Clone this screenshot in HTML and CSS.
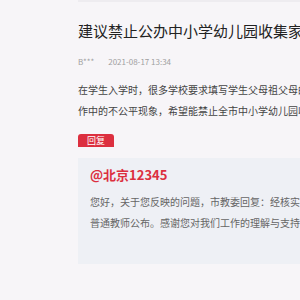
FILE: index.html
```html
<!DOCTYPE html>
<html lang="zh-CN">
<head>
    <meta charset="UTF-8">
    <title>建议禁止公办中小学幼儿园收集家长信息</title>
    <link rel="stylesheet" href="styles.css">
</head>
<body>
    <div class="page">
        <div class="top-edge"></div>
        <div class="article">
            <h1 class="title">建议禁止公办中小学幼儿园收集家长工作单位信息</h1>
            <div class="meta">
                <span class="author">B***</span>
                <span class="date">2021-08-17 13:34</span>
            </div>
            <p class="content">在学生入学时，很多学校要求填写学生父母祖父母的工作单位和职务，容易造成工作中的不公平现象，希望能禁止全市中小学幼儿园收集此类信息。</p>

            <div class="reply">
                <span class="reply-tag">回复</span>
                <div class="reply-box">
                    <div class="reply-from">@北京12345</div>
                    <p class="reply-text">您好，关于您反映的问题，市教委回复：经核实，相关信息仅用于学校管理，不会向普通教师公布。感谢您对我们工作的理解与支持！</p>
                </div>
            </div>
        </div>
    </div>
</body>
</html>
```

FILE: styles.css
```css
:root {
    --background: #f7f5f8;
    --edge: #eeecf0;
    --foreground: #333333;
    --muted: #a0a0a0;
    --primary: #dc2f3f;
    --card: #eef0f5;
    --card-foreground: #666666;
}

html,
body {
    height: 100%;
    overflow: hidden;
}

body {
    font-family: "Noto Sans CJK SC", "Noto Sans", sans-serif;
    background-color: var(--background);
    color: var(--foreground);
    margin: 0;
}

.page {
    padding-left: 78px;
}

.top-edge {
    height: 2px;
    background-color: var(--edge);
}

/* the article is wider than the window, lines run off the right edge */
.article {
    width: 460px;
}

.title {
    font-size: 15px;
    font-weight: 400;
    line-height: 20px;
    margin: 19px 0 0;
    white-space: nowrap;
    color: #222222;
}

.meta {
    margin-top: 15px;
    font-size: 8px;
    line-height: 12px;
    color: var(--muted);
    display: flex;
    gap: 14px;
}

.content {
    font-size: 10px;
    line-height: 21px;
    margin: 11px 0 0;
    width: 365px;
    color: #444444;
}

.reply {
    margin-top: 13px;
}

.reply-tag {
    display: inline-block;
    background-color: var(--primary);
    color: #ffffff;
    font-size: 9px;
    line-height: 13px;
    padding: 0 9px;
    border-radius: 3px 3px 0 0;
    margin-bottom: 3px;
    vertical-align: top;
}

.reply-box {
    background-color: var(--card);
    padding: 7px 12px 31px;
}

.reply-from {
    color: var(--primary);
    font-size: 13px;
    font-weight: 700;
    line-height: 20px;
}

.reply-text {
    font-size: 10px;
    line-height: 21px;
    margin: 6px 0 0;
    width: 375px;
    color: var(--card-foreground);
}
```
